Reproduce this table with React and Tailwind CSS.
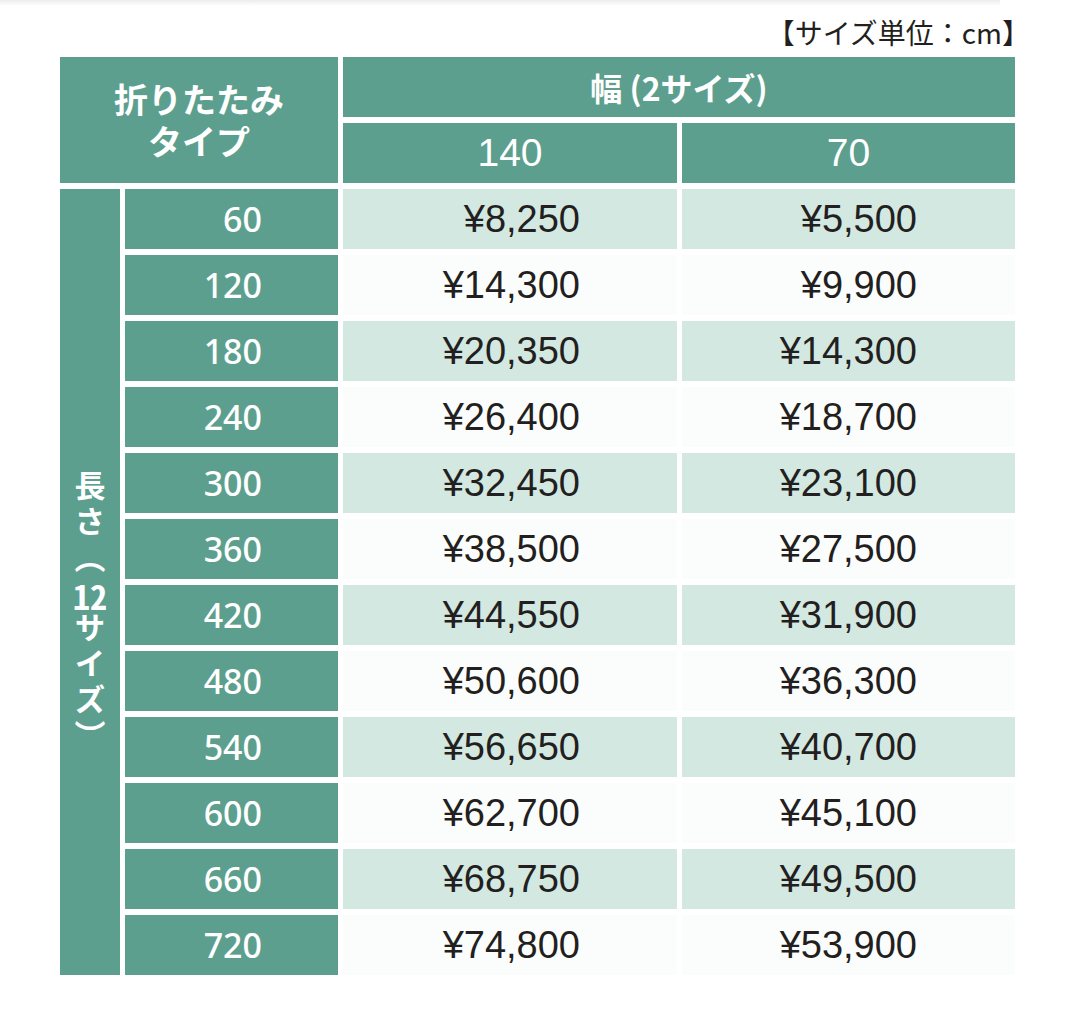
import React from "react";

const rows = [
  { len: "60", w140: "¥8,250", w70: "¥5,500" },
  { len: "120", w140: "¥14,300", w70: "¥9,900" },
  { len: "180", w140: "¥20,350", w70: "¥14,300" },
  { len: "240", w140: "¥26,400", w70: "¥18,700" },
  { len: "300", w140: "¥32,450", w70: "¥23,100" },
  { len: "360", w140: "¥38,500", w70: "¥27,500" },
  { len: "420", w140: "¥44,550", w70: "¥31,900" },
  { len: "480", w140: "¥50,600", w70: "¥36,300" },
  { len: "540", w140: "¥56,650", w70: "¥40,700" },
  { len: "600", w140: "¥62,700", w70: "¥45,100" },
  { len: "660", w140: "¥68,750", w70: "¥49,500" },
  { len: "720", w140: "¥74,800", w70: "¥53,900" },
];

const jp = "font-['Noto_Sans_CJK_JP',sans-serif]";
const num = "font-['Liberation_Sans',Arial,sans-serif]";

export default function App() {
  return (
    <div className="min-h-[1031px] w-[1080px] bg-white">
      <div className="h-[6px] w-[1000px] bg-gradient-to-b from-[#ececec] to-white" />
      <div className="pl-[60px]">
        <div
          className={`mt-[8px] mb-[7px] h-[36px] w-[970px] text-right text-[28px] leading-[36px] text-[#231f20] ${jp}`}
        >
          【サイズ単位：cm】
        </div>

        <div className="grid grid-cols-[60px_213px_334px_333px] gap-x-[5px] gap-y-[6px]">
          <div
            className={`col-span-2 row-span-2 flex flex-col items-center justify-center bg-[#5d9f8e] text-[34px] font-bold leading-[42px] text-white ${jp}`}
          >
            <span>折りたたみ</span>
            <span>タイプ</span>
          </div>
          <div
            className={`col-span-2 flex h-[60px] items-center justify-center bg-[#5d9f8e] text-[32px] font-bold text-white ${jp}`}
          >
            幅&nbsp;(2サイズ)
          </div>
          <div
            className={`flex h-[60px] items-center justify-center bg-[#5d9f8e] text-[39px] text-white ${num}`}
          >
            140
          </div>
          <div
            className={`flex h-[60px] items-center justify-center bg-[#5d9f8e] text-[39px] text-white ${num}`}
          >
            70
          </div>

          <div className="row-span-12 flex items-center justify-center bg-[#5d9f8e] pt-[62px]">
            <span
              className={`[writing-mode:vertical-rl] text-[31px] font-bold tracking-[5px] text-white ${jp}`}
            >
              長さ（<span className="[text-combine-upright:all] text-[34px]">12</span>サイズ）
            </span>
          </div>

          {rows.map((r, i) => {
            const bg = i % 2 === 0 ? "bg-[#d2e8e1]" : "bg-[#fbfdfc]";
            return (
              <React.Fragment key={r.len}>
                <div
                  className={`flex h-[60px] items-center justify-end bg-[#5d9f8e] pr-[76px] text-[34px] font-medium text-white font-['Noto_Sans',sans-serif]`}
                >
                  {r.len}
                </div>
                <div
                  className={`flex h-[60px] items-center justify-end pr-[97px] text-[38px] text-[#231f20] ${bg} ${num}`}
                >
                  {r.w140}
                </div>
                <div
                  className={`flex h-[60px] items-center justify-end pr-[98px] text-[38px] text-[#231f20] ${bg} ${num}`}
                >
                  {r.w70}
                </div>
              </React.Fragment>
            );
          })}
        </div>
      </div>
    </div>
  );
}
